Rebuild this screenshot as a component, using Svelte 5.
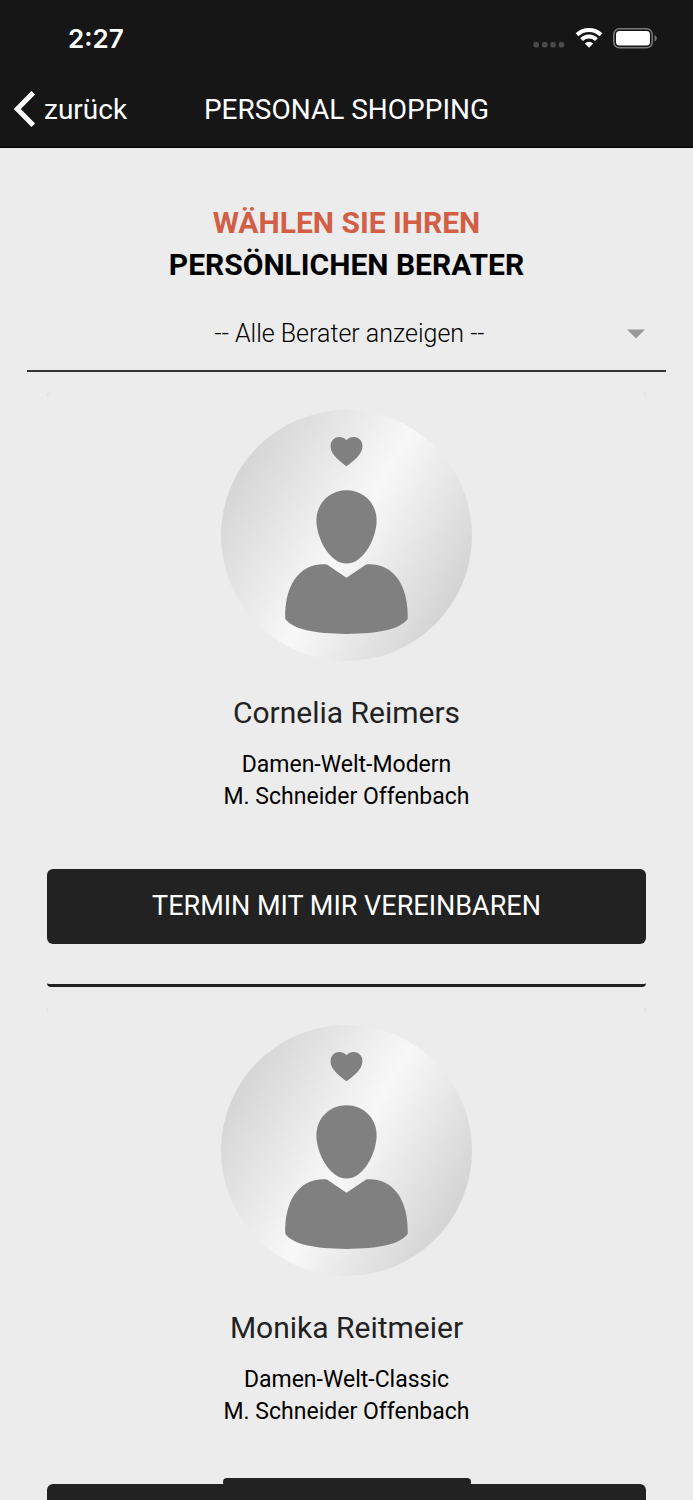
<script>
  const advisors = [
    { id: 1, name: "Cornelia Reimers", department: "Damen-Welt-Modern", store: "M. Schneider Offenbach" },
    { id: 2, name: "Monika Reitmeier", department: "Damen-Welt-Classic", store: "M. Schneider Offenbach" },
  ];

  let selected = $state("");

  let visible = $derived(
    selected === "" ? advisors : advisors.filter((a) => String(a.id) === selected)
  );
</script>

<div class="screen">
  <header>
    <div class="status-bar">
      <span class="time">2:27</span>
      <div class="status-icons">
        <svg width="32" height="28" viewBox="0 0 32 28" fill="#4a4a4a" aria-hidden="true">
          <rect x="0.5" y="18" width="5.5" height="5.5" rx="1.8" />
          <rect x="9" y="18" width="5.5" height="5.5" rx="1.8" />
          <rect x="17.3" y="18" width="5.5" height="5.5" rx="1.8" />
          <rect x="25.7" y="18" width="5.5" height="5.5" rx="1.8" />
        </svg>
        <svg width="28" height="28" viewBox="0 0 28 28" aria-hidden="true">
          <g fill="none" stroke="#fff" stroke-width="4">
            <path d="M2 10.8 A17.3 17.3 0 0 1 26 10.8" />
            <path d="M6.6 15.6 A10.6 10.6 0 0 1 21.4 15.6" />
          </g>
          <path d="M14 23.8 L9.8 19.5 A6 6 0 0 1 18.2 19.5 Z" fill="#fff" />
        </svg>
        <svg width="44" height="28" viewBox="0 0 44 28" aria-hidden="true">
          <rect x="0.8" y="4.8" width="38.4" height="19" rx="5.5" fill="none" stroke="#7c7c7c" stroke-width="1.5" />
          <rect x="3" y="7" width="34" height="14.4" rx="3.5" fill="#fff" />
          <path d="M41.6 11 C44.4 12 44.4 16.5 41.6 17.5 Z" fill="#7c7c7c" />
        </svg>
      </div>
    </div>
    <nav>
      <button class="back" type="button">
        <svg width="24" height="38" viewBox="0 0 24 38" aria-hidden="true">
          <path d="M20.3 1.7 L4.3 18 L20.3 34.3" fill="none" stroke="#fff" stroke-width="5" />
        </svg>
        <span>zurück</span>
      </button>
      <h1>PERSONAL SHOPPING</h1>
    </nav>
  </header>

  <main>
    <h2><span class="accent">WÄHLEN SIE IHREN</span><br />PERSÖNLICHEN BERATER</h2>

    <div class="select-wrap">
      <select aria-label="Berater" bind:value={selected}>
        <option value="">-- Alle Berater anzeigen --</option>
        {#each advisors as advisor}
          <option value={String(advisor.id)}>{advisor.name}</option>
        {/each}
      </select>
      <svg class="caret" width="18" height="10" viewBox="0 0 18 10" aria-hidden="true">
        <path d="M0 0.5 H18 L9 9.5 Z" fill="#989898" />
      </svg>
    </div>

    <div class="list">
      {#each visible as advisor (advisor.id)}
        <article>
          <div class="avatar">
            <svg viewBox="0 0 250 250" fill="#808080" aria-hidden="true">
              <path d="M125 30.2 C129 25.5 136 26.2 139 30.2 C142.2 34.5 141 40.5 137.5 44.8 C134 49.2 129.5 52.8 125 56 C120.5 52.8 116 49.2 112.5 44.8 C109 40.5 107.8 34.5 111 30.2 C114 26.2 121 25.5 125 30.2 Z" />
              <path d="M125 80 C142 80 155 93 155 110 C155 127 142 153 125 153 C108 153 95 127 95 110 C95 93 108 80 125 80 Z" />
              <path d="M105.5 153.8 L125 167 L144.5 153.8 C171 151.5 187 174 186 208 C178.5 218.5 157 223 125 223 C93 223 71.5 218.5 64 208 C63 174 79 151.5 105.5 153.8 Z" />
            </svg>
          </div>
          <h3>{advisor.name}</h3>
          <p>{advisor.department}<br />{advisor.store}</p>
          <button class="book" type="button">TERMIN MIT MIR VEREINBAREN</button>
        </article>
      {/each}
    </div>
  </main>

  <div class="home-indicator"></div>
</div>

<style>
  :global(body) {
    margin: 0;
    background: #ececec;
  }

  .screen {
    position: relative;
    display: flex;
    flex-direction: column;
    height: 100vh;
    overflow: hidden;
    font-family: Roboto, "Liberation Sans", sans-serif;
    color: #000;
    background: #ececec;
  }

  header {
    flex: none;
    color: #fff;
    background: #161616;
    border-bottom: 1px solid #000;
  }

  .status-bar {
    display: flex;
    align-items: center;
    justify-content: space-between;
    height: 76px;
    padding: 0 36px 0 68px;
  }

  .time {
    font-family: Inter, sans-serif;
    font-size: 26px;
    font-weight: 600;
  }

  .status-icons {
    display: flex;
    align-items: center;
    gap: 10px;
  }

  nav {
    display: grid;
    grid-template-columns: 1fr auto 1fr;
    align-items: center;
    height: 68px;
    padding: 0 13px 3px;
  }

  .back {
    display: flex;
    align-items: center;
    gap: 7px;
    padding: 0;
    border: 0;
    font: inherit;
    font-size: 28px;
    line-height: 40px;
    color: inherit;
    background: none;
    cursor: pointer;
  }

  h1 {
    margin: 0;
    font-size: 28px;
    font-weight: 400;
    line-height: 40px;
  }

  main {
    flex: 1;
    min-height: 0;
    padding: 54px 27px 0;
    overflow-y: auto;
    scrollbar-width: none;
    text-align: center;
  }

  h2 {
    margin: 0;
    font-size: 30px;
    font-weight: 700;
    line-height: 42px;
  }

  .accent {
    color: #d15e45;
  }

  .select-wrap {
    position: relative;
    margin-top: 9px;
  }

  select {
    appearance: none;
    display: block;
    width: 100%;
    height: 77px;
    padding: 2px 14px 0 20px;
    border: 0;
    border-bottom: 2px solid #333;
    border-radius: 0;
    font: inherit;
    font-size: 25px;
    font-weight: 300;
    color: #000;
    background: transparent;
    text-align: center;
    text-align-last: center;
  }

  .caret {
    position: absolute;
    top: 34px;
    right: 21px;
    pointer-events: none;
  }

  .list {
    display: flex;
    flex-direction: column;
    gap: 20px;
    padding: 20px;
  }

  article {
    position: relative;
    padding: 18px 0 40px;
    border-bottom: 3px solid #222;
    border-radius: 4px;
  }

  /* faint rounded corners along the card's top edge */
  article::before {
    content: "";
    position: absolute;
    top: 0;
    left: 0;
    right: 0;
    height: 4px;
    border: solid #dedede;
    border-width: 0 1px;
    border-radius: 4px 4px 0 0;
  }

  .avatar {
    width: 251px;
    height: 251px;
    margin: 0 auto 32px;
    border-radius: 50%;
    background: linear-gradient(120deg, #d2d2d2 10%, #f8f8f8 51%, #d0d0d0 90%);
  }

  .avatar svg {
    display: block;
  }

  h3 {
    margin: 0 0 16px;
    font-size: 30px;
    font-weight: 400;
    line-height: 40px;
    color: #222;
  }

  p {
    margin: 0 0 56px;
    font-size: 23px;
    line-height: 32px;
  }

  .book {
    display: block;
    width: 100%;
    height: 75px;
    padding: 0 0 2px;
    border: 0;
    border-radius: 6px;
    font: inherit;
    font-size: 27px;
    color: #fff;
    background: #222;
    cursor: pointer;
  }

  /* floats above the scrolling list */
  .home-indicator {
    position: absolute;
    bottom: 14px;
    left: 50%;
    width: 248px;
    height: 8px;
    border-radius: 4px;
    background: #222;
    transform: translateX(-50%);
  }
</style>
